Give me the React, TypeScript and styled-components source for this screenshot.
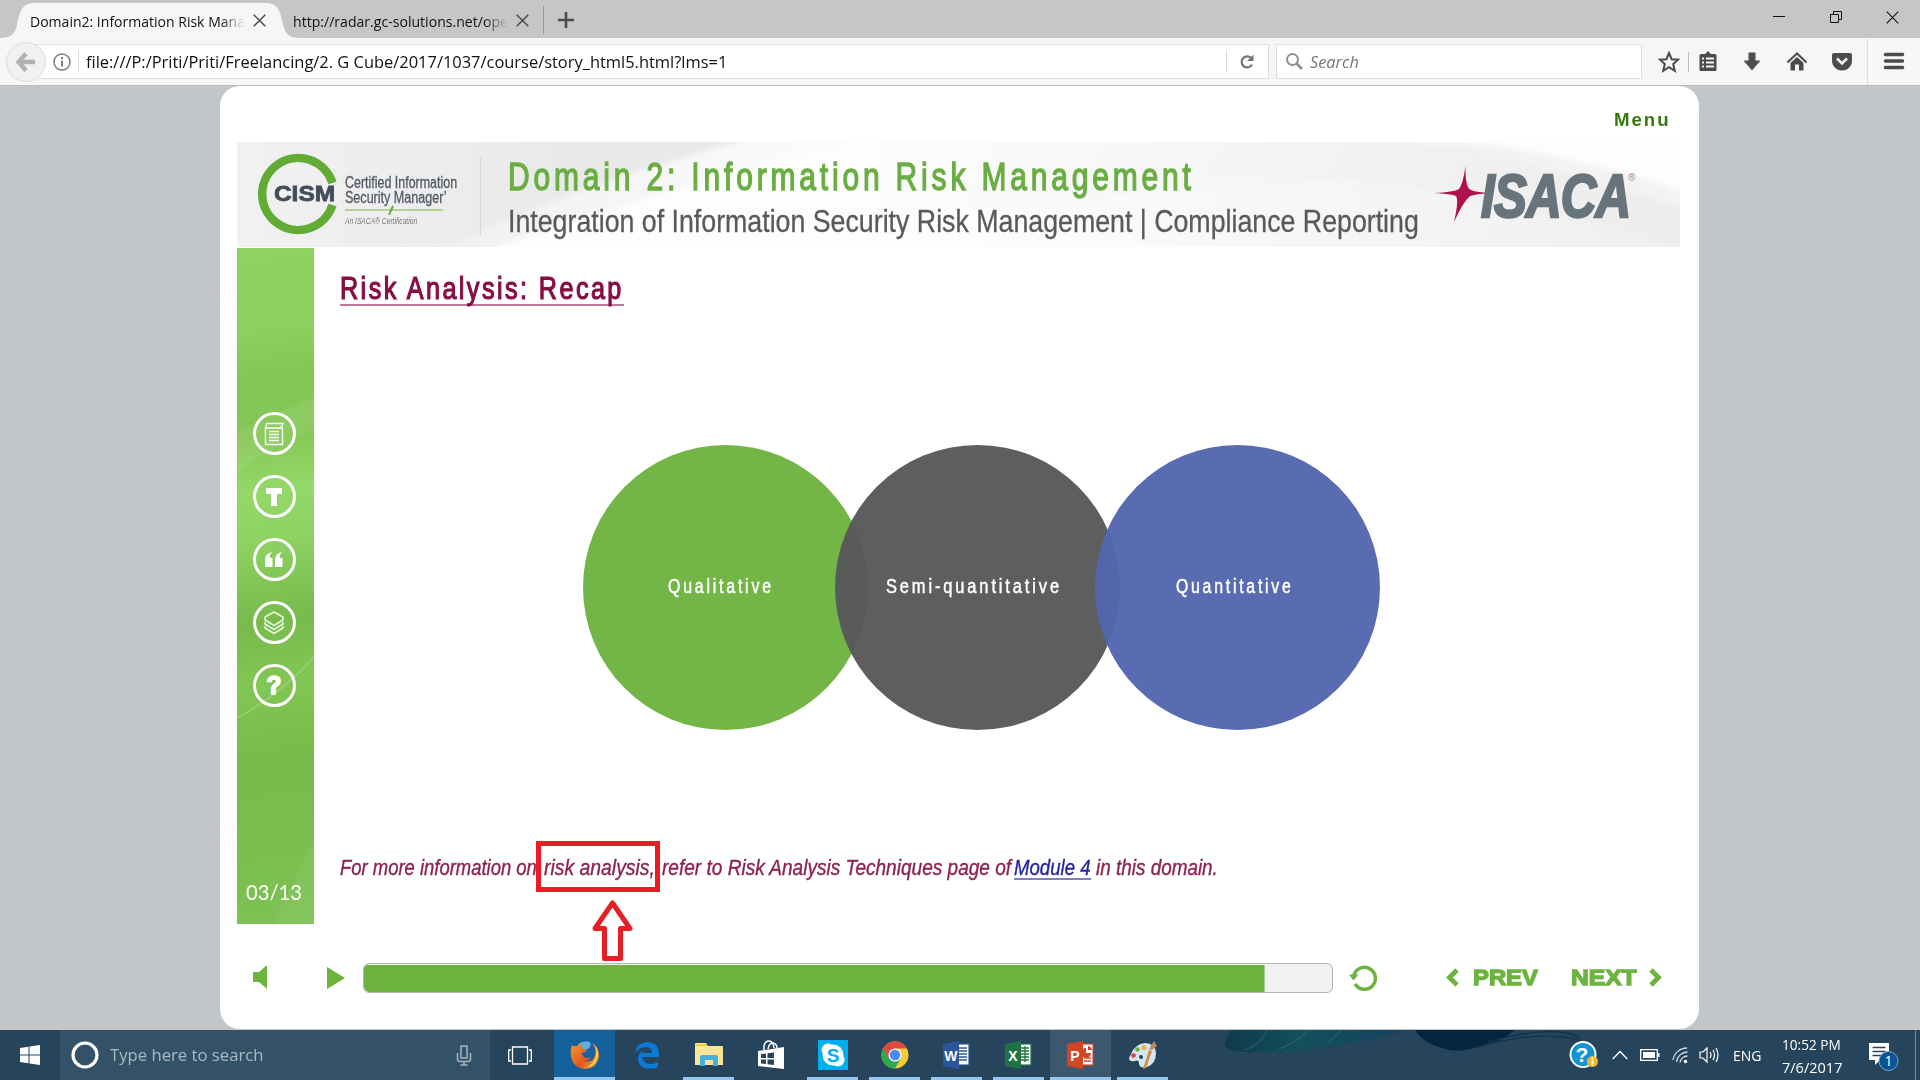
import React, { useLayoutEffect, useRef, useState } from "react";
import styled, { createGlobalStyle } from "styled-components";

const GlobalStyle = createGlobalStyle`
  * { box-sizing: border-box; }
  body { margin: 0; background: #c1c6ca; overflow: hidden; }
  svg { display: block; flex: none; }
`;

const SYSTEM = '"Open Sans", "Noto Sans", sans-serif';
const COURSE = '"Liberation Sans Narrow", "Liberation Sans", sans-serif';

/* ---------- text that is condensed to a given width ---------- */

type TextStyle = {
  $width: number;
  $size: number;
  $line: number;
  $color: string;
  $font?: string;
  $weight?: number;
  $italic?: boolean;
  $spacing?: number;
  $stroke?: number;
  $left?: number;
};

const TextBox = styled.div<TextStyle>`
  flex: none;
  width: ${(p) => p.$width}px;
  height: ${(p) => p.$line}px;
  margin-left: ${(p) => p.$left ?? 0}px;
  line-height: ${(p) => p.$line}px;
  font-family: ${(p) => p.$font ?? SYSTEM};
  font-size: ${(p) => p.$size}px;
  font-weight: ${(p) => p.$weight ?? 400};
  font-style: ${(p) => (p.$italic ? "italic" : "normal")};
  letter-spacing: ${(p) => p.$spacing ?? 0}px;
  color: ${(p) => p.$color};
  -webkit-text-stroke: ${(p) => p.$stroke ?? 0}px ${(p) => p.$color};
  white-space: nowrap;
`;

const TextRun = styled.span`
  display: inline-block;
  transform-origin: 0 50%;
`;

function FitText({ children, ...style }: TextStyle & { children: string }) {
  const ref = useRef<HTMLSpanElement>(null);
  const [scale, setScale] = useState(1);
  useLayoutEffect(() => {
    if (ref.current) setScale(style.$width / (ref.current.offsetWidth - (style.$spacing ?? 0)));
  }, [style.$width, style.$spacing]);
  return (
    <TextBox {...style}>
      <TextRun ref={ref} style={{ transform: `scaleX(${scale})` }}>
        {children}
      </TextRun>
    </TextBox>
  );
}

/* ---------- browser chrome ---------- */

const Screen = styled.div`
  width: 1920px;
  height: 1080px;
  display: flex;
  flex-direction: column;
  overflow: hidden;
`;

const TabStrip = styled.div`
  height: 38px;
  flex: none;
  display: flex;
  align-items: stretch;
  background: #c6c6c6;
`;

const ActiveTab = styled.div`
  position: relative;
  width: 293px;
  display: flex;
  align-items: center;
  padding-left: 30px;
`;

const TabShape = styled.svg`
  position: absolute;
  left: 0;
  top: 0;
`;

const TabTitle = styled.div<{ $fade: string }>`
  position: relative;
  display: flex;
  width: 215px;
  padding-top: 3px;
  &::after {
    content: "";
    position: absolute;
    right: 0;
    top: 0;
    width: 24px;
    height: 100%;
    background: linear-gradient(90deg, transparent, ${(p) => p.$fade});
  }
`;

const TabClose = styled.div`
  position: relative;
  margin: 3px 0 0 8px;
`;

const BackgroundTab = styled.div`
  width: 250px;
  display: flex;
  align-items: center;
`;

const NewTab = styled.div`
  display: flex;
  align-items: center;
  padding-left: 14px;
  margin: 6px 0 4px;
  border-left: 1px solid #959595;
`;

const WindowButtons = styled.div`
  margin: 11px 21px 0 auto;
  display: flex;
  gap: 43px;
`;

const NavBar = styled.div`
  height: 48px;
  flex: none;
  display: flex;
  align-items: center;
  padding: 0 15px 0 6px;
  background: #f6f6f6;
  border-bottom: 1px solid #b9bdc1;
`;

const BackButton = styled.div`
  position: relative;
  z-index: 1;
  width: 40px;
  height: 40px;
  border: 1px solid #dcdcdc;
  border-radius: 50%;
  background: #f1f1f1;
  display: flex;
  align-items: center;
  justify-content: center;
`;

const UrlField = styled.div`
  width: 1237px;
  height: 35px;
  margin-left: -14px;
  padding-left: 20px;
  border: 1px solid #dfdfdf;
  background: #fff;
  display: flex;
  align-items: center;
`;

const Rule = styled.div<{ $height: number; $color: string; $left?: number; $right?: number }>`
  flex: none;
  width: 1px;
  height: ${(p) => p.$height}px;
  margin-left: ${(p) => p.$left ?? 0}px;
  margin-right: ${(p) => p.$right ?? 0}px;
  background: ${(p) => p.$color};
`;

const SearchField = styled.div`
  width: 366px;
  height: 35px;
  margin-left: 7px;
  padding-left: 8px;
  border: 1px solid #dfdfdf;
  background: #fff;
  display: flex;
  align-items: center;
`;

const Tools = styled.div`
  margin-left: auto;
  display: flex;
  align-items: center;
`;

const ToolIcon = styled.div<{ $left: number }>`
  margin-left: ${(p) => p.$left}px;
  width: 22px;
  height: 22px;
  margin-top: 1px;
`;

const Cross = ({ size = 13, color = "#4a4a4a", width = 1.5 }) => (
  <svg width={size} height={size} viewBox="0 0 13 13">
    <path d="M.7 .7 12.3 12.3M12.3 .7 .7 12.3" stroke={color} strokeWidth={width} />
  </svg>
);

function Browser() {
  return (
    <>
      <TabStrip>
        <ActiveTab>
          <TabShape width="300" height="38">
            <path d="M0 38C12 38 15 33 17 25C20 12 21 3 35 3H265C279 3 280 12 283 24C285 33 288 38 300 38Z" fill="#f6f6f6" />
          </TabShape>
          <TabTitle $fade="#f6f6f6">
            <FitText $width={215} $size={15} $line={22} $color="#111">Domain2: Information Risk Mana</FitText>
          </TabTitle>
          <TabClose><Cross /></TabClose>
        </ActiveTab>
        <BackgroundTab>
          <TabTitle $fade="#c6c6c6">
            <FitText $width={215} $size={15} $line={22} $color="#111">http://radar.gc-solutions.net/ope</FitText>
          </TabTitle>
          <TabClose><Cross /></TabClose>
        </BackgroundTab>
        <NewTab>
          <svg width="16" height="16"><path d="M8 0V16M0 8H16" stroke="#4c4c4c" strokeWidth="2.6" /></svg>
        </NewTab>
        <WindowButtons>
          <svg width="14" height="14"><path d="M1 5.500H13" stroke="#111" /></svg>
          <svg width="14" height="14">
            <path d="M1.5 3.5H9.500V11.500H1.500ZM4.500 3.500V.5H12.500V8.500H9.500" fill="none" stroke="#111" />
          </svg>
          <Cross size={13} color="#111" width={1.1} />
        </WindowButtons>
      </TabStrip>
      <NavBar>
        <BackButton>
          <svg width="20" height="20"><path d="M10 1.500 2.500 10 10 18.500M3 10H19" fill="none" stroke="#b1b1b1" strokeWidth="4.500" /></svg>
        </BackButton>
        <UrlField>
          <svg width="18" height="18">
            <circle cx="9" cy="9" r="8" fill="none" stroke="#7c7c7c" strokeWidth="1.500" />
            <path d="M9 7.500V13.500M9 4V6" stroke="#7c7c7c" strokeWidth="2" />
          </svg>
          <Rule $height={23} $color="#dcdcdc" $left={7} />
          <FitText $width={641} $size={16} $line={24} $color="#111" $left={7}>
            file:///P:/Priti/Priti/Freelancing/2. G Cube/2017/1037/course/story_html5.html?lms=1
          </FitText>
          <Rule $height={23} $color="#dcdcdc" $left={499} $right={12} />
          <svg width="16" height="16" viewBox="0 0 16 16">
            <path d="M13 10.500A5.500 5.500 0 1 1 12 4" fill="none" stroke="#747474" strokeWidth="2.200" />
            <path d="M14.500 .5V7H8Z" fill="#747474" />
          </svg>
        </UrlField>
        <SearchField>
          <svg width="19" height="19">
            <circle cx="7.500" cy="7.500" r="5.500" fill="none" stroke="#929292" strokeWidth="2" />
            <path d="M11.500 11.500 17 17" stroke="#929292" strokeWidth="2.800" />
          </svg>
          <FitText $width={49} $size={16} $line={24} $color="#767676" $italic $left={6}>Search</FitText>
        </SearchField>
        <Tools>
          <ToolIcon $left={0}>
            <svg width="22" height="22"><path d="M11 2 13.600 8.200 20 8.700 15.200 13 16.800 19.800 11 16.200 5.200 19.800 6.800 13 2 8.700 8.400 8.200Z" fill="none" stroke="#4c4c4c" strokeWidth="2" /></svg>
          </ToolIcon>
          <Rule $height={20} $color="#bbb" $left={8} />
          <ToolIcon $left={8}>
            <svg width="22" height="22">
              <path d="M2.500 4.500Q2.500 3 4 3H8L11 0 14 3H18Q19.500 3 19.500 4.500V18.500Q19.500 20 18 20H4Q2.500 20 2.500 18.500Z" fill="#4c4c4c" />
              <path d="M5 7.500H7M9 7.500H17M5 11.500H7M9 11.500H17M5 15.500H7M9 15.500H17" stroke="#f6f6f6" strokeWidth="2" />
            </svg>
          </ToolIcon>
          <ToolIcon $left={22}>
            <svg width="22" height="22"><path d="M7.500 1.500H14.500V9.500H19.500L11 19.500 2.500 9.500H7.500Z" fill="#4c4c4c" /></svg>
          </ToolIcon>
          <ToolIcon $left={23}>
            <svg width="22" height="22">
              <path d="M1.500 11.500 11 2.500 20.500 11.500" fill="none" stroke="#4c4c4c" strokeWidth="2" />
              <path d="M4.500 12 11 6 17.500 12V19.500H13V13.500H9V19.500H4.500Z" fill="#4c4c4c" />
            </svg>
          </ToolIcon>
          <ToolIcon $left={23}>
            <svg width="22" height="22">
              <path d="M1 4Q1 2 3 2H19Q21 2 21 4V9.500C21 15 17 19.500 11 19.500S1 15 1 9.500Z" fill="#4c4c4c" />
              <path d="M6 7.500 11 12.500 16 7.500" fill="none" stroke="#f6f6f6" strokeWidth="2.600" />
            </svg>
          </ToolIcon>
          <Rule $height={46} $color="#dedede" $left={14} $right={5} />
          <ToolIcon $left={10}>
            <svg width="22" height="22"><path d="M2.500 3.500H19.500M2.500 10H19.500M2.500 16.500H19.500" stroke="#4c4c4c" strokeWidth="3.600" strokeLinecap="round" /></svg>
          </ToolIcon>
        </Tools>
      </NavBar>
    </>
  );
}

/* ---------- course player ---------- */

const Page = styled.main`
  height: 944px;
  flex: none;
  padding: 0 221px 1px 220px;
  background: #c1c6ca;
`;

const Player = styled.div`
  height: 943px;
  border-radius: 20px;
  background: #fff;
  padding: 0 19px 0 17px;
  display: flex;
  flex-direction: column;
`;

const MenuRow = styled.div`
  height: 56px;
  flex: none;
  padding: 21px 11px 0 0;
  display: flex;
  justify-content: flex-end;
`;

const Banner = styled.header`
  position: relative;
  height: 105px;
  flex: none;
  display: flex;
  overflow: hidden;
`;

const BannerArt = styled.svg`
  position: absolute;
  inset: 0;
`;

const CismLogo = styled.div`
  position: relative;
  width: 107px;
  flex: none;
  padding: 11px 0 0 20px;
`;

const CismName = styled.div`
  position: absolute;
  left: 37px;
  top: 38px;
`;

const CismCaption = styled.div`
  position: relative;
  width: 136px;
  padding: 33px 0 0 1px;
`;

const Divider = styled.div`
  position: relative;
  width: 1px;
  height: 78px;
  margin-top: 15px;
  background: #d6d6d6;
`;

const Titles = styled.div`
  position: relative;
  width: 929px;
  padding: 12px 0 0 27px;
`;

const IsacaLogo = styled.div`
  position: relative;
  width: 270px;
  display: flex;
  padding: 24px 0 0 24px;
`;

const IsacaName = styled.div`
  margin: -1px 0 0 -13px;
`;

const Registered = styled.div`
  margin: 6px 0 0 -3px;
`;

const Stage = styled.section`
  height: 676px;
  margin-top: 1px;
  flex: none;
  display: flex;
`;

const Sidebar = styled.nav`
  position: relative;
  width: 77px;
  flex: none;
  display: flex;
  flex-direction: column;
  align-items: center;
  gap: 20px;
  padding: 164px 3px 0 0;
  background: linear-gradient(172deg, #8ed260 0, #8dd061 12%, #83c656 20%, #85c856 28%, #94d86a 36%, #8ed263 43%, #78ba4c 55%, #82c655 64%, #78ba4b 75%, #7ec254 100%);
`;

const SideSheen = styled.svg`
  position: absolute;
  inset: 0;
`;

const RoundButton = styled.div`
  position: relative;
  width: 43px;
  height: 43px;
  flex: none;
  border: 3px solid #fff;
  border-radius: 50%;
  display: flex;
  align-items: center;
  justify-content: center;
  color: #fff;
  font: 900 25px/37px "Liberation Sans", sans-serif;
  -webkit-text-stroke: 1.5px #fff;
`;

const PageCount = styled.div`
  position: relative;
  margin: auto 0 19px -1px;
`;

const Slide = styled.article`
  padding-left: 26px;
  display: flex;
  flex-direction: column;
`;

const Heading = styled.div`
  width: 284px;
  height: 45px;
  margin-top: 13px;
  padding-top: 9px;
  border-bottom: 2px solid #bd7799;
`;

const Circles = styled.div`
  display: flex;
  margin: 139px 0 0 243px;
`;

const Circle = styled.div<{ $color: string; $overlap: number; $inset: number }>`
  width: 285px;
  height: 285px;
  flex: none;
  margin-left: ${(p) => -p.$overlap}px;
  padding: 126px 0 0 ${(p) => p.$inset}px;
  border-radius: 50%;
  background: ${(p) => p.$color};
`;

const Note = styled.div`
  display: flex;
  margin-top: 124px;
`;

const Highlight = styled.div`
  position: relative;
  display: flex;
`;

const Frame = styled.div`
  position: absolute;
  left: -1px;
  top: -13px;
  width: 124px;
  height: 51px;
  border: 5px solid #ed1c24;
`;

const Pointer = styled.svg`
  position: absolute;
  left: 55px;
  top: 45px;
`;

const NoteLink = styled.div`
  margin-left: 3px;
  height: 26px;
  border-bottom: 2px solid #7f7fc6;
`;

const Controls = styled.footer`
  height: 104px;
  display: flex;
  align-items: center;
  padding: 3px 0 0 16px;
`;

const Track = styled.div`
  width: 970px;
  height: 30px;
  margin-left: 18px;
  border: 1px solid #b5b5b5;
  border-radius: 6px;
  padding: 1px 0 0;
  background: #f1f1f1;
  overflow: hidden;
`;

const Fill = styled.div`
  width: 901px;
  height: 27px;
  border-radius: 4px 0 0 5px;
  background: #6db23f;
  border-right: 1px solid #a9c994;
`;

const Spacer = styled.div<{ $w: number }>`
  width: ${(p) => p.$w}px;
  flex: none;
`;

const GREEN = "#6db33f";

function BannerBackground() {
  return (
    <BannerArt width="1443" height="105">
      <defs>
        <linearGradient id="left" x1="0" y1="0" x2="1" y2="0">
          <stop offset="0" stopColor="#f2f2f2" />
          <stop offset=".6" stopColor="#e9e9e9" />
          <stop offset="1" stopColor="#e8e8e8" />
        </linearGradient>
        <linearGradient id="ray" x1="0" y1="0" x2="1" y2="0">
          <stop offset="0" stopColor="#f0f0f0" />
          <stop offset="1" stopColor="#fdfdfd" />
        </linearGradient>
        <linearGradient id="mid" x1="0" y1="0" x2="1" y2=".1">
          <stop offset="0" stopColor="#fdfdfd" />
          <stop offset=".5" stopColor="#f4f4f4" />
          <stop offset="1" stopColor="#ededed" />
        </linearGradient>
        <linearGradient id="low" x1="0" y1="0" x2="1" y2="0">
          <stop offset="0" stopColor="#fdfdfd" />
          <stop offset="1" stopColor="#efefef" />
        </linearGradient>
        <filter id="soften" x="-5%" y="-20%" width="110%" height="140%">
          <feGaussianBlur stdDeviation="2.5" />
        </filter>
      </defs>
      <rect width="1443" height="105" fill="#fdfdfd" />
      <g filter="url(#soften)">
        <path d="M-20 -20H560L500 0Q320 50 215 105L190 125H-20Z" fill="url(#left)" />
        <path d="M500 0L540 -20H660L620 0Q380 60 260 105L240 125H180L215 105Q320 50 500 0Z" fill="url(#ray)" />
        <path d="M640 -20H1120L1180 0Q1330 22 1460 72V125H1200Q1080 60 640 70Z" fill="url(#mid)" />
        <path d="M800 70Q1060 10 1260 62Q1380 82 1460 110V125H700Z" fill="url(#low)" />
        <path d="M1170 0Q1330 20 1460 72V55Q1340 12 1230 0Z" fill="#f3f3f3" />
      </g>
    </BannerArt>
  );
}

function CourseBanner() {
  return (
    <Banner>
      <BannerBackground />
      <CismLogo>
        <svg width="82" height="82">
          <path d="M75.500 30A36 36 0 1 0 75.500 52" fill="none" stroke="#62ab35" strokeWidth="8.500" />
        </svg>
        <CismName>
          <FitText $width={61} $size={22} $line={28} $color="#414d5b" $weight={700} $font={'"Liberation Sans", sans-serif'} $stroke={0.8}>CISM</FitText>
        </CismName>
      </CismLogo>
      <CismCaption>
        <FitText $width={112} $size={16} $line={16} $color="#505963" $font={COURSE} $stroke={0.3}>Certified Information</FitText>
        <FitText $width={102} $size={16} $line={14} $color="#505963" $font={COURSE} $stroke={0.3}>Security Manager’</FitText>
        <svg width="100" height="10"><path d="M0 5H98" stroke="#9aca7c" strokeWidth="1.500" /><path d="M44 10 48 1" stroke="#68ae40" strokeWidth="2" /></svg>
        <FitText $width={72} $size={9} $line={12} $color="#777" $font={COURSE} $italic>An ISACA® Certification</FitText>
      </CismCaption>
      <Divider />
      <Titles>
        <FitText $width={683} $size={39} $line={46} $color="#69ae43" $font={COURSE} $spacing={5} $stroke={1.4}>
          Domain 2: Information Risk Management
        </FitText>
        <FitText $width={911} $size={32} $line={43} $color="#595959" $font={COURSE} $stroke={0.3}>
          Integration of Information Security Risk Management | Compliance Reporting
        </FitText>
      </Titles>
      <IsacaLogo>
        <svg width="60" height="56">
          <path d="M31.500 0Q31 22 37 24Q42 26.500 60 27Q43 27.500 36 30Q29 36 20 56Q25 34 22 30Q18 28 0 27Q20 26 25 23Q29 18 31.500 0Z" fill="#b0104c" transform="translate(0 0)" />
        </svg>
        <IsacaName>
          <FitText $width={150} $size={62} $line={62} $color="#68747c" $weight={700} $italic $spacing={-1} $stroke={2.6} $font={COURSE}>ISACA</FitText>
        </IsacaName>
        <Registered>
          <FitText $width={7} $size={10} $line={12} $color="#87919a" $font={COURSE}>®</FitText>
        </Registered>
      </IsacaLogo>
    </Banner>
  );
}

function SideMenu() {
  return (
    <Sidebar>
      <SideSheen width="77" height="676">
        <path d="M0 185Q40 165 78 148V180Q30 200 0 225Z" fill="#fff" opacity=".07" />
        <path d="M0 470Q45 445 78 408" fill="none" stroke="#b8e29a" strokeWidth="1.500" opacity=".5" />
        <path d="M36 677Q55 635 78 590V677Z" fill="#fff" opacity=".06" />
      </SideSheen>
      <RoundButton>
        <svg width="22" height="26" viewBox="0 0 22 26">
          <path d="M2.500 7V23.500H19.500V7ZM2.500 7 4 2.500H20L18 7M6 10.500H16M6 13.500H16M6 16.500H16M6 19.500H16" fill="none" stroke="#fff" strokeWidth="1.400" />
        </svg>
      </RoundButton>
      <RoundButton>
        <svg width="18" height="20"><path d="M1 1H17V7H12V19H6V7H1Z" fill="#fff" /></svg>
      </RoundButton>
      <RoundButton>
        <svg width="18" height="16"><path d="M7.500 0Q4.500 2 4.800 6H7.500V15H0V8Q0 1 7.500 0ZM17.500 0Q14.500 2 14.800 6H17.500V15H10V8Q10 1 17.500 0Z" fill="#fff" /></svg>
      </RoundButton>
      <RoundButton>
        <svg width="22" height="26" viewBox="0 0 22 26">
          <path d="M11 2 20 7V10L11 15.500 2 10V7ZM2 12V14L11 19.500 20 14V12M2 16V18L11 23.500 20 18V16" fill="none" stroke="#e7f7dc" strokeWidth="1.600" />
        </svg>
      </RoundButton>
      <RoundButton>?</RoundButton>
      <PageCount>
        <FitText $width={56} $size={22} $line={26} $color="#fff" $font={'Lato, "Open Sans", sans-serif'}>03/13</FitText>
      </PageCount>
    </Sidebar>
  );
}

const circles = [
  { label: "Qualitative", color: "rgba(109,179,63,.96)", overlap: 0, inset: 85, width: 103 },
  { label: "Semi-quantitative", color: "rgba(87,87,87,.96)", overlap: 33, inset: 51, width: 173 },
  { label: "Quantitative", color: "rgba(83,102,174,.96)", overlap: 25, inset: 81, width: 115 },
];

function NoteText({ width, left, children, color = "#8c2150" }: { width: number; left?: number; children: string; color?: string }) {
  return (
    <FitText $width={width} $left={left} $size={22} $line={28} $color={color} $font={COURSE} $italic $stroke={0.35}>
      {children}
    </FitText>
  );
}

function SlideContent() {
  return (
    <Slide>
      <Heading>
        <FitText $width={281} $size={31} $line={38} $color="#860f43" $font={COURSE} $spacing={3} $stroke={1.2}>
          Risk Analysis: Recap
        </FitText>
      </Heading>
      <Circles>
        {circles.map((c) => (
          <Circle key={c.label} $color={c.color} $overlap={c.overlap} $inset={c.inset}>
            <FitText $width={c.width} $size={20} $line={30} $color="#fff" $font={COURSE} $spacing={3.5} $stroke={0.5}>
              {c.label}
            </FitText>
          </Circle>
        ))}
      </Circles>
      <Note>
        <NoteText width={197}>For more information on</NoteText>
        <Highlight>
          <NoteText width={111} left={7}>risk analysis,</NoteText>
          <Frame />
          <Pointer width="42" height="64">
            <path d="M20.500 4 38 29.500H28.500V59.500H12.500V29.500H3Z" fill="#fff" stroke="#e41f26" strokeWidth="5" strokeLinejoin="round" />
          </Pointer>
        </Highlight>
        <NoteText width={349} left={7}>refer to Risk Analysis Techniques page of</NoteText>
        <NoteLink>
          <NoteText width={77} color="#2224a0">Module 4</NoteText>
        </NoteLink>
        <NoteText width={122} left={5}>in this domain.</NoteText>
      </Note>
    </Slide>
  );
}

function PlayerControls() {
  const label = { $size: 22, $line: 24, $color: GREEN, $weight: 700, $stroke: 1.3, $font: '"Liberation Sans", sans-serif' };
  return (
    <Controls>
      <svg width="15" height="26"><path d="M0 7H6L14 0V24L6 17H0Z" fill={GREEN} /></svg>
      <Spacer $w={59} />
      <svg width="18" height="22"><path d="M0 0 18 11 0 22Z" fill={GREEN} /></svg>
      <Track><Fill /></Track>
      <Spacer $w={16} />
      <svg width="28" height="28">
        <path d="M4.500 13A11 11 0 1 1 6 20" fill="none" stroke={GREEN} strokeWidth="3.500" />
        <path d="M0 10.500H9.500L4.500 16.500Z" fill={GREEN} />
      </svg>
      <Spacer $w={69} />
      <svg width="13" height="19"><path d="M11 2 3.500 9.500 11 17" fill="none" stroke={GREEN} strokeWidth="4.800" /></svg>
      <FitText {...label} $width={65} $left={14}>PREV</FitText>
      <FitText {...label} $width={66} $left={33}>NEXT</FitText>
      <Spacer $w={12} />
      <svg width="13" height="19"><path d="M2 2 9.500 9.500 2 17" fill="none" stroke={GREEN} strokeWidth="4.800" /></svg>
    </Controls>
  );
}

/* ---------- taskbar ---------- */

const Taskbar = styled.div`
  position: relative;
  height: 50px;
  flex: none;
  display: flex;
  background: #26455c;
`;

const Wallpaper = styled.svg`
  position: absolute;
  left: 1217px;
  top: 0;
`;

const StartButton = styled.div`
  width: 60px;
  display: flex;
  align-items: center;
  justify-content: center;
`;

const TaskSearch = styled.div`
  width: 430px;
  display: flex;
  align-items: center;
  padding: 0 17px 0 11px;
  background: #345267;
`;

const TaskView = styled.div`
  width: 64px;
  display: flex;
  align-items: center;
  padding-left: 18px;
`;

const TaskButton = styled.div<{ $bg?: string; $open?: boolean; $wide?: boolean }>`
  width: 62px;
  height: 50px;
  display: flex;
  align-items: center;
  justify-content: center;
  border-right: 1px solid transparent;
  background: ${(p) => p.$bg ?? "transparent"} content-box;
  position: relative;
  &::after {
    content: "";
    display: ${(p) => (p.$open ? "block" : "none")};
    position: absolute;
    left: ${(p) => (p.$wide ? 0 : 5)}px;
    right: ${(p) => (p.$wide ? 0 : 5)}px;
    bottom: 0;
    height: 3px;
    background: #94c6ef;
  }
`;

const Tray = styled.div`
  position: relative;
  margin-left: auto;
  width: 352px;
  display: flex;
  align-items: center;
`;

const Clock = styled.div`
  margin-left: 20px;
  padding-top: 1px;
`;

const ShowDesktop = styled.div`
  width: 5px;
  height: 50px;
  margin-left: auto;
  border-left: 1px solid #78899a;
`;

const Office = ({ letter, color, dark, children }: { letter: string; color: string; dark: string; children: React.ReactNode }) => (
  <svg width="30" height="30" viewBox="0 0 30 30">
    <rect x="14" y="4" width="13" height="21" fill="#fff" stroke={color} strokeWidth="1.200" />
    {children}
    <path d="M1 4 17 1V29L1 26Z" fill={dark} />
    <text x="8.800" y="20.500" textAnchor="middle" fontFamily="Liberation Sans, sans-serif" fontWeight="700" fontSize="14" fill="#fff">{letter}</text>
  </svg>
);

function TaskApps() {
  return (
    <>
      <TaskButton $bg="#14609b" $open $wide>
        <svg width="30" height="30" viewBox="0 0 30 30">
          <defs>
            <linearGradient id="fox" x1="0" y1="0" x2="1" y2="1">
              <stop offset="0" stopColor="#f39b2d" /><stop offset=".6" stopColor="#e5541c" /><stop offset="1" stopColor="#f8d548" />
            </linearGradient>
          </defs>
          <circle cx="16" cy="12" r="11.500" fill="#1d5f9f" />
          <path d="M8 4Q14 0 20 2Q22 6 18 9Q14 11 12 8Z" fill="#55b2e2" />
          <path d="M2 5Q4 7 7 6Q10 3 13 3Q10 6 12 8L17 10Q15 13 12 13Q12 17 16 18Q20 18 21 16Q20 20 15 21Q23 23 25 15Q26 8 22 3Q30 8 29 17Q27 28 15 29Q3 28 1 17Q0 11 2 5Z" fill="url(#fox)" />
          <path d="M24 4Q31 12 26 21Q23 26 18 27Q25 22 26 15Q27 9 24 4Z" fill="#fbdc54" />
        </svg>
      </TaskButton>
      <TaskButton>
        <svg width="26" height="28" viewBox="0 0 26 28">
          <path d="M1 12Q3 1 14 1Q25 2 25 13V16H8Q9 22 16 23Q20 23 24 21V26Q20 28 15 27.500Q4 27 4 17Q5 11 11 8Q8 10 8 12H18Q18 6 12 6Q5 6 1 12Z" fill="#0a7ad8" />
        </svg>
      </TaskButton>
      <TaskButton $open>
        <svg width="30" height="26" viewBox="0 0 30 26">
          <path d="M1 2Q1 1 2 1H12L14 4H28Q29 4 29 5V23H1Z" fill="#fce597" /><path d="M1 4H13V2H3Z" fill="#f2c83c" />
          <path d="M6 24V15Q6 13 8 13H22Q24 13 24 15V24H19V18H11V24Z" fill="#43b1df" />
        </svg>
      </TaskButton>
      <TaskButton>
        <svg width="28" height="30" viewBox="0 0 28 30">
          <path d="M1 11 27 7V29L1 26Z" fill="#fff" /><path d="M7 10V6Q8 1 12 1Q16 1 17 8M11 9Q12 3 16 3Q20 4 20 8" fill="none" stroke="#fff" strokeWidth="1.500" />
          <path d="M4 14 9 13.500V18H4ZM10.500 13.200 17 12.500V18H10.500ZM4 19.500H9V24L4 23.500ZM10.500 19.500H17V25L10.500 24.200Z" fill="#26455c" />
        </svg>
      </TaskButton>
      <TaskButton $open>
        <svg width="30" height="30" viewBox="0 0 30 30">
          <rect width="30" height="30" fill="#00aff0" />
          <circle cx="10" cy="10" r="6.500" fill="#fff" /><circle cx="20" cy="20" r="6.500" fill="#fff" /><circle cx="15" cy="15" r="10.500" fill="#fff" />
          <text x="15" y="22" textAnchor="middle" fontFamily="Liberation Sans, sans-serif" fontWeight="700" fontSize="19" fill="#00aff0">S</text>
        </svg>
      </TaskButton>
      <TaskButton $open>
        <svg width="28" height="28" viewBox="0 0 28 28">
          <circle cx="14" cy="14" r="13.500" fill="#fcca34" />
          <path d="M14 14 2.300 7.200A13.500 13.500 0 0 0 14 27.500L20 17Z" fill="#2da94f" />
          <path d="M14 14 7.500 17 2.300 7.200A13.500 13.500 0 0 1 26 7.500H14Z" fill="#dd4b3e" />
          <circle cx="14" cy="14" r="6.600" fill="#f3f3f3" /><circle cx="14" cy="14" r="5.200" fill="#4c8bf5" />
        </svg>
      </TaskButton>
      <TaskButton $open>
        <Office letter="W" color="#2b579a" dark="#2b579a"><path d="M17 8H25M17 11H25M17 14H25M17 17H25M17 20H25" stroke="#2b579a" strokeWidth="1.300" /></Office>
      </TaskButton>
      <TaskButton $open>
        <Office letter="X" color="#207245" dark="#1f7244"><path d="M17 8H25M17 11H25M17 14H25M17 17H25M17 20H25M21 6V22" stroke="#207245" strokeWidth="1.300" /></Office>
      </TaskButton>
      <TaskButton $bg="#3c576e" $open $wide>
        <Office letter="P" color="#d24625" dark="#d24625"><path d="M18 18H25M18 21H25" stroke="#d24625" strokeWidth="1.300" /><path d="M20 8V13H25A5 5 0 1 1 20 8ZM22 6A5 5 0 0 1 26 10H22Z" fill="#d24625" /></Office>
      </TaskButton>
      <TaskButton $open>
        <svg width="30" height="30" viewBox="0 0 30 30">
          <path d="M3 14Q7 4 17 3Q27 3 28 13Q28 24 19 27Q12 29 11 24Q11 19 7 21Q1 22 1 18Z" fill="#d5e6f3" />
          <circle cx="5.500" cy="15.500" r="2.300" fill="#d9423a" /><circle cx="9.500" cy="9.500" r="2.300" fill="#67b345" /><circle cx="16" cy="7.500" r="2.500" fill="#f1b32d" /><circle cx="13" cy="17" r="2" fill="#26455c" />
          <path d="M15 29 21 10 24 11 18 28Z" fill="#d78a3b" /><path d="M21 9 26 1 29 6 24 10Z" fill="#b98a5c" />
        </svg>
      </TaskButton>
    </>
  );
}

function SystemTray() {
  return (
    <Tray>
      <svg width="30" height="30" viewBox="0 0 30 30">
        <circle cx="15" cy="14.500" r="12.500" fill="#0e95d4" stroke="#fff" strokeWidth="2" />
        <text x="14" y="22" textAnchor="middle" fontFamily="Liberation Sans, sans-serif" fontWeight="700" fontSize="21" fill="#fff">?</text>
        <circle cx="24.500" cy="21.500" r="5.500" fill="#f5b429" />
        <path d="M24.500 17.500V19.500M24.500 20.500V25.500" stroke="#fff" strokeWidth="2" />
      </svg>
      <Spacer $w={14} />
      <svg width="16" height="10"><path d="M.7 9 8 1.500 15.300 9" fill="none" stroke="#fff" strokeWidth="1.400" /></svg>
      <Spacer $w={12} />
      <svg width="20" height="12"><path d="M.7.700H17.300V11.300H.7Z" fill="none" stroke="#fff" strokeWidth="1.300" /><path d="M3 3H15V9H3ZM18 4H19.500V8H18Z" fill="#fff" /></svg>
      <Spacer $w={12} />
      <svg width="17" height="17" viewBox="0 0 17 17">
        <path d="M1 13A14 14 0 0 1 15 1M4.500 15A11 11 0 0 1 15.500 5M8 15.500A8 8 0 0 1 15.500 9" fill="none" stroke="#d4dce2" strokeWidth="1.300" /><circle cx="13.500" cy="14.500" r="1.800" fill="#fff" />
      </svg>
      <Spacer $w={10} />
      <svg width="21" height="18" viewBox="0 0 21 18">
        <path d="M1 6H4L8 2V16L4 12H1ZM11 6Q13 9 11 12M14 4Q17 9 14 14M17 2Q21 9 17 16" fill="none" stroke="#fff" strokeWidth="1.200" />
      </svg>
      <FitText $width={29} $size={15} $line={22} $color="#fff" $left={13}>ENG</FitText>
      <Clock>
        <FitText $width={59} $size={15} $line={23} $color="#fff">10:52 PM</FitText>
        <FitText $width={60} $size={15} $line={23} $color="#fff">7/6/2017</FitText>
      </Clock>
      <Spacer $w={26} />
      <svg width="32" height="32" viewBox="0 0 32 32">
        <path d="M1 4H21V21H12L7 26V21H1Z" fill="#fff" /><path d="M4.500 8.500H17.500M4.500 12.500H17.500M4.500 16.500H14" stroke="#26455c" strokeWidth="1.300" />
        <circle cx="20.500" cy="22" r="9.500" fill="#0c5593" stroke="#7da5c5" />
        <text x="20.500" y="27" textAnchor="middle" fontFamily="Open Sans, sans-serif" fontSize="14" fill="#fff">1</text>
      </svg>
      <ShowDesktop />
    </Tray>
  );
}

function WindowsTaskbar() {
  return (
    <Taskbar>
      <Wallpaper width="380" height="50">
        <defs>
          <linearGradient id="wing" x1="0" y1="0" x2="1" y2="0">
            <stop offset="0" stopColor="#0f3a4b" /><stop offset=".4" stopColor="#12505b" /><stop offset="1" stopColor="#154260" />
          </linearGradient>
        </defs>
        <path d="M14 0H190Q160 10 120 15Q70 24 25 22Q3 20 9 11Z" fill="url(#wing)" />
        <path d="M28 20Q45 14 50 0M62 19Q85 10 90 0M110 14 125 0" fill="none" stroke="#4a7c70" strokeWidth="1" opacity=".6" />
        <path d="M198 0H298Q285 12 260 17Q240 24 225 18Q205 12 198 0Z" fill="#04243f" />
        <path d="M260 17Q310 3 345 7Q365 9 361 12M270 12Q320 -2 350 3Q370 8 360 13" fill="none" stroke="#14334b" strokeWidth="1.300" />
      </Wallpaper>
      <StartButton>
        <svg width="20" height="20"><path d="M0 3 8.500 1.700V9.500H0ZM9.500 1.500 20 0V9.500H9.500ZM0 10.500H8.500V18.300L0 17ZM9.500 10.500H20V20L9.500 18.500Z" fill="#fff" /></svg>
      </StartButton>
      <TaskSearch>
        <svg width="28" height="28"><circle cx="14" cy="14" r="12" fill="none" stroke="#fff" strokeWidth="3.200" /></svg>
        <FitText $width={153} $size={17} $line={26} $color="#aab9c5" $left={11}>Type here to search</FitText>
        <Spacer $w={193} />
        <svg width="16" height="21"><path d="M5 1H11V13H5ZM1.500 8V15Q2 16.500 4 16.500H12Q14 16.500 14.500 15V8M8 16.500V20M4.500 20H11.500" fill="none" stroke="#a7b6c2" strokeWidth="1.500" /></svg>
      </TaskSearch>
      <TaskView>
        <svg width="24" height="19"><path d="M4.500 1H19.500V18H4.500ZM3 4H.7V15H3M21 4H23.300V15H21" fill="none" stroke="#fff" strokeWidth="1.300" /></svg>
      </TaskView>
      <TaskApps />
      <SystemTray />
    </Taskbar>
  );
}

export default function App() {
  return (
    <Screen>
      <GlobalStyle />
      <Browser />
      <Page>
        <Player>
          <MenuRow>
            <FitText $width={55} $size={19} $line={25} $color="#38790f" $weight={700} $spacing={2} $font={'"Liberation Sans", sans-serif'}>Menu</FitText>
          </MenuRow>
          <CourseBanner />
          <Stage>
            <SideMenu />
            <SlideContent />
          </Stage>
          <PlayerControls />
        </Player>
      </Page>
      <WindowsTaskbar />
    </Screen>
  );
}
